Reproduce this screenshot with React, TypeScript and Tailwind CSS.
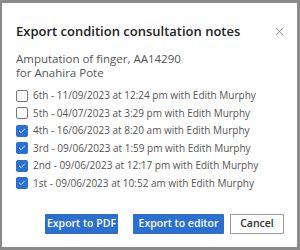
import { X, Check } from "lucide-react";

const notes = [
  { label: "6th - 11/09/2023 at 12:24 pm with Edith Murphy", checked: false },
  { label: "5th - 04/07/2023 at 3:29 pm with Edith Murphy", checked: false },
  { label: "4th - 16/06/2023 at 8:20 am with Edith Murphy", checked: true },
  { label: "3rd - 09/06/2023 at 1:59 pm with Edith Murphy", checked: true },
  { label: "2nd - 09/06/2023 at 12:17 pm with Edith Murphy", checked: true },
  { label: "1st - 09/06/2023 at 10:52 am with Edith Murphy", checked: true },
];

export default function App() {
  return (
    <main
      className="w-[300px] h-[250px] bg-[#8a8a8a] pt-[3px] pl-[2px] pr-[3px] pb-[3px] overflow-hidden"
      style={{ fontFamily: '"Open Sans", sans-serif' }}
    >
      <div className="h-full bg-white flex flex-col pl-[14px] pr-[13px]">

        {/* Header */}
        <div className="flex items-center justify-between pt-[19px]">
          <h1 className="text-[13px] font-semibold text-[#222]">Export condition consultation notes</h1>
          <button className="-mr-[2px] text-[#666]">
            <X size={13} strokeWidth={1.2} />
          </button>
        </div>

        {/* Subtitle */}
        <div className="mt-[10px] text-[11.5px] leading-[14px] text-[#555]">
          <p>Amputation of finger, AA14290</p>
          <p>for Anahira Pote</p>
        </div>

        {/* Checklist */}
        <ul className="mt-[10px] flex flex-col gap-[5px]">
          {notes.map((n) => (
            <li key={n.label} className="flex items-center gap-[5px] h-[12.5px]">
              {n.checked ? (
                <span className="w-[12px] h-[12px] rounded-[2px] bg-[#2b6fd0] flex items-center justify-center">
                  <Check size={8} strokeWidth={2.5} className="text-white" />
                </span>
              ) : (
                <span className="w-[12px] h-[12px] rounded-[2px] border border-[#777] bg-white" />
              )}
              <span className="text-[10px] text-[#555]">{n.label}</span>
            </li>
          ))}
        </ul>

        {/* Actions */}
        <div className="mt-auto mb-[13px] flex justify-end">
          <button className="w-[73px] h-[20px] rounded-[1px] bg-[#2b6fd0] text-white text-[10.5px] font-semibold">Export to PDF</button>
          <button className="ml-[15px] w-[91px] h-[20px] rounded-[1px] bg-[#2b6fd0] text-white text-[10.5px] font-semibold">Export to editor</button>
          <button className="ml-[6px] w-[54px] h-[20px] rounded-[1px] border border-[#999] bg-white text-[#333] text-[10.5px] font-semibold">Cancel</button>
        </div>

      </div>
    </main>
  );
}
